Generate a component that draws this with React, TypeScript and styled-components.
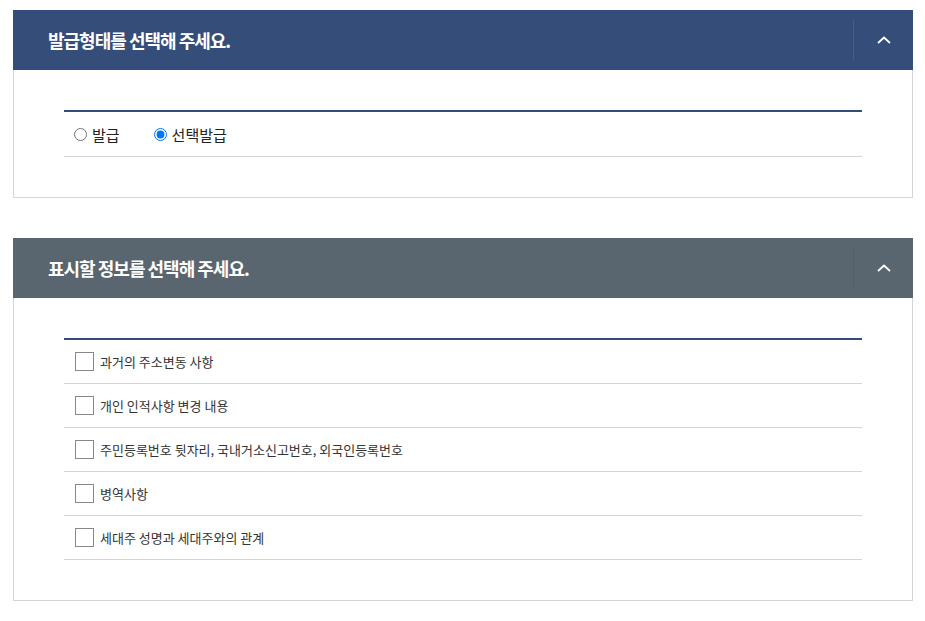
import React, { FC, useState } from "react";
import styled, { createGlobalStyle } from "styled-components";

const GlobalStyle = createGlobalStyle`
  html, body {
    margin: 0;
    padding: 0;
    background: #fff;
    font-family: "Noto Sans CJK KR", "Noto Sans", sans-serif;
    color: #333;
  }
`;

const infoItems = [
  "과거의 주소변동 사항",
  "개인 인적사항 변경 내용",
  "주민등록번호 뒷자리, 국내거소신고번호, 외국인등록번호",
  "병역사항",
  "세대주 성명과 세대주와의 관계",
];

const ChevronUp: FC = () => (
  <svg width="14" height="8" viewBox="0 0 14 8" fill="none">
    <polyline points="1,7 7,1.5 13,7" stroke="#fff" strokeWidth="1.8" />
  </svg>
);

interface SectionProps {
  title: string;
  tone: "navy" | "slate";
  children: React.ReactNode;
}

const Section: FC<SectionProps> = ({ title, tone, children }) => {
  const [open, setOpen] = useState(true);
  return (
    <Panel>
      <Header $tone={tone}>
        <Title>{title}</Title>
        <Toggle $tone={tone} onClick={() => setOpen(!open)} aria-label="접기">
          <ChevronUp />
        </Toggle>
      </Header>
      {open && <Body>{children}</Body>}
    </Panel>
  );
};

const App: FC = () => {
  const [kind, setKind] = useState("select");
  const [checked, setChecked] = useState<boolean[]>(infoItems.map(() => false));

  return (
    <Page>
      <GlobalStyle />
      <Section title="발급형태를 선택해 주세요." tone="navy">
        <List>
          <RadioRow>
            <RadioLabel>
              <Radio
                type="radio"
                name="kind"
                checked={kind === "all"}
                onChange={() => setKind("all")}
              />
              발급
            </RadioLabel>
            <RadioLabel>
              <Radio
                type="radio"
                name="kind"
                checked={kind === "select"}
                onChange={() => setKind("select")}
              />
              선택발급
            </RadioLabel>
          </RadioRow>
        </List>
      </Section>

      <Section title="표시할 정보를 선택해 주세요." tone="slate">
        <List>
          {infoItems.map((item, i) => (
            <CheckRow key={item}>
              <CheckLabel>
                <Check
                  type="checkbox"
                  checked={checked[i]}
                  onChange={() =>
                    setChecked(checked.map((c, j) => (j === i ? !c : c)))
                  }
                />
                {item}
              </CheckLabel>
            </CheckRow>
          ))}
        </List>
      </Section>
    </Page>
  );
};

export default App;

const Page = styled.div`
  padding: 10px 12px 0 13px;
  display: flex;
  flex-direction: column;
  gap: 40px;
`;

const Panel = styled.section`
  width: 900px;
  box-sizing: border-box;
`;

const Header = styled.div<{ $tone: "navy" | "slate" }>`
  height: 60px;
  display: flex;
  align-items: center;
  justify-content: space-between;
  background: ${(p) => (p.$tone === "navy" ? "#344d79" : "#59656f")};
`;

const Title = styled.h2`
  margin: 0;
  padding-left: 35px;
  font-size: 18px;
  font-weight: 700;
  letter-spacing: -1px;
  color: #fff;
`;

const Toggle = styled.button<{ $tone: "navy" | "slate" }>`
  width: 60px;
  height: 40px;
  padding: 0;
  border: none;
  border-left: 1px solid
    ${(p) => (p.$tone === "navy" ? "#475f8a" : "#4f5d71")};
  background: transparent;
  display: flex;
  align-items: center;
  justify-content: center;
  cursor: pointer;
`;

const Body = styled.div`
  border: 1px solid #d5d5d5;
  border-top: none;
  padding: 40px 50px;
`;

const List = styled.div`
  border-top: 2px solid #344d79;
`;

const RadioRow = styled.div`
  height: 44px;
  display: flex;
  align-items: center;
  gap: 34px;
  padding-left: 10px;
  border-bottom: 1px solid #d5d5d5;
`;

const RadioLabel = styled.label`
  display: flex;
  align-items: center;
  gap: 5px;
  font-size: 15px;
  color: #222;
  cursor: pointer;
`;

const Radio = styled.input`
  width: 13px;
  height: 13px;
  margin: 0;
`;

const CheckRow = styled.div`
  height: 43px;
  display: flex;
  align-items: center;
  padding-left: 11px;
  border-bottom: 1px solid #d5d5d5;
`;

const CheckLabel = styled.label`
  display: flex;
  align-items: center;
  gap: 6px;
  font-size: 13px;
  color: #333;
  cursor: pointer;
`;

const Check = styled.input`
  appearance: none;
  width: 19px;
  height: 19px;
  margin: 0;
  border: 1px solid #888;
  background: #fff;
  cursor: pointer;

  &:checked {
    background: #344d79;
    border-color: #344d79;
  }
`;
